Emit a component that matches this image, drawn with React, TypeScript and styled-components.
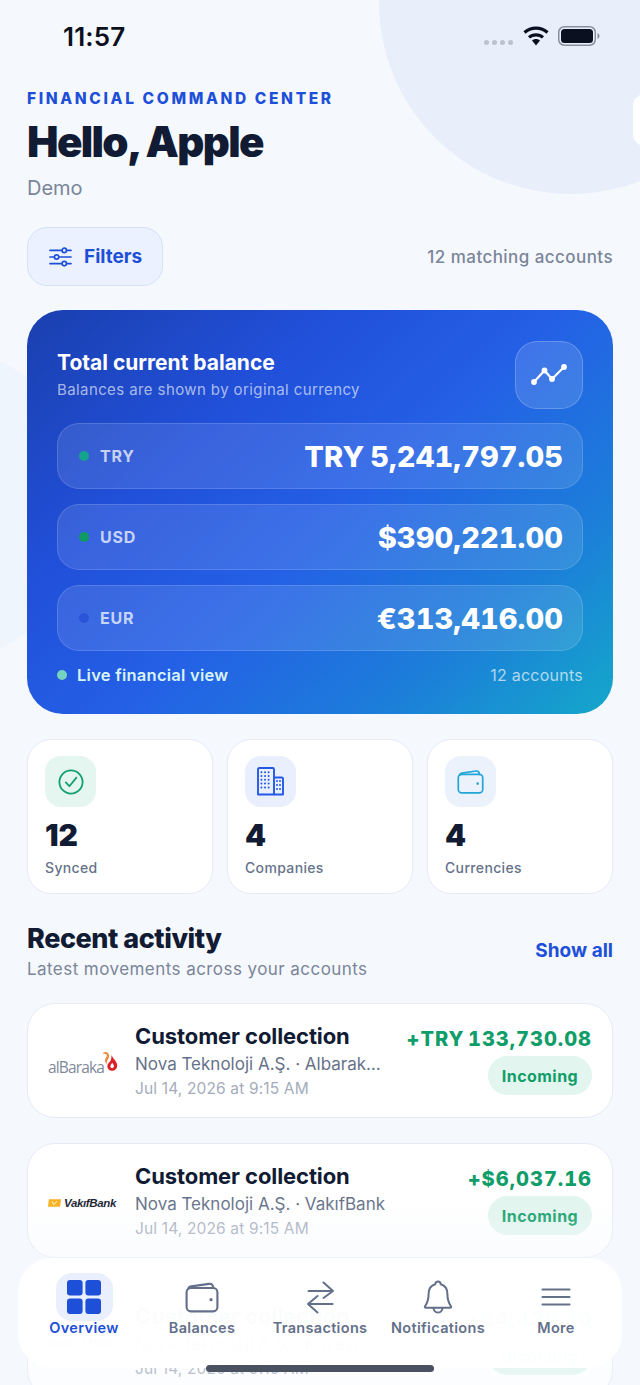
import React from 'react'
import styled, { createGlobalStyle } from 'styled-components'

const GlobalStyle = createGlobalStyle`
  html, body { margin: 0; padding: 0; background: #f5f8fd; }
  * { box-sizing: border-box; }
  body { font-family: Inter, "Noto Sans", "Liberation Sans", sans-serif; }
`

const Page = styled.div`
  position: relative;
  width: 640px;
  height: 1385px;
  overflow: hidden;
  background: #f5f8fd;
`

const TopCircle = styled.div`
  position: absolute;
  left: 379px;
  top: -190px;
  width: 384px;
  height: 384px;
  border-radius: 50%;
  background: #e8eefa;
`

const LeftBlob = styled.div`
  position: absolute;
  left: -230px;
  top: 345px;
  width: 320px;
  height: 320px;
  border-radius: 50%;
  background: #eff5fc;
`

const EdgeChip = styled.div`
  position: absolute;
  left: 633px;
  top: 94px;
  width: 40px;
  height: 52px;
  border-radius: 12px;
  background: #ffffff;
`

const Content = styled.div`
  position: relative;
  padding: 0 27px;
`

const StatusBar = styled.div`
  display: flex;
  align-items: center;
  justify-content: space-between;
  height: 72px;
  padding: 0 13px 0 36px;
`

const Clock = styled.span`
  font-size: 26px;
  font-weight: 600;
  letter-spacing: 0.15px;
  color: #0b1020;
`

const StatusIcons = styled.div`
  display: flex;
  align-items: center;
  gap: 9px;
`

const SignalDots = styled.div`
  display: flex;
  gap: 3px;
  margin-top: 12px;
  margin-right: 1px;
`

const SignalDot = styled.span`
  width: 5px;
  height: 5px;
  border-radius: 50%;
  background: #bcc2cc;
`

const Eyebrow = styled.div`
  margin-top: 18px;
  font-size: 15.5px;
  line-height: 18px;
  font-weight: 800;
  letter-spacing: 2.64px;
  color: #1d4fd8;
`

const Title = styled.h1`
  margin: 11px 0 0;
  font-size: 42px;
  line-height: 46px;
  font-weight: 900;
  letter-spacing: -1.62px;
  color: #111b33;
`

const Company = styled.div`
  margin-top: 11px;
  font-size: 20px;
  line-height: 24px;
  color: #7a8599;
`

const FilterRow = styled.div`
  display: flex;
  align-items: center;
  justify-content: space-between;
  margin-top: 27px;
`

const FilterButton = styled.button`
  display: flex;
  align-items: center;
  gap: 12px;
  width: 136px;
  height: 59px;
  padding: 0 0 0 21px;
  border: 1.5px solid #d6e1f8;
  border-radius: 20px;
  background: #ebf1fe;
  font-family: inherit;
  font-size: 19px;
  font-weight: 700;
  color: #1d4fd8;
`

const MatchCount = styled.span`
  font-size: 17px;
  font-weight: 500;
  letter-spacing: 0.44px;
  color: #7a8599;
`

const BalanceCard = styled.section`
  margin-top: 24px;
  height: 404px;
  padding: 31px 30px 0;
  border-radius: 36px;
  background: linear-gradient(138deg, #1a3fae 0%, #2150da 30%, #2460e6 52%, #1c7fd9 78%, #14a8ca 100%);
  color: #fff;
`

const BalanceHead = styled.div`
  display: flex;
  justify-content: space-between;
  align-items: flex-start;
  height: 82px;
`

const BalanceTitle = styled.div`
  margin-top: 8px;
  font-size: 21px;
  line-height: 28px;
  font-weight: 700;
`

const BalanceNote = styled.div`
  margin-top: 3px;
  font-size: 15px;
  line-height: 20px;
  letter-spacing: 0.4px;
  color: rgba(255, 255, 255, 0.62);
`

const TrendTile = styled.div`
  display: flex;
  align-items: center;
  justify-content: center;
  width: 68px;
  height: 68px;
  border: 1.5px solid rgba(255, 255, 255, 0.2);
  border-radius: 22px;
  background: rgba(255, 255, 255, 0.13);
`

const CurrencyList = styled.div`
  display: flex;
  flex-direction: column;
  gap: 15px;
`

const CurrencyRow = styled.div`
  display: flex;
  align-items: center;
  height: 66px;
  padding: 0 19px 0 21px;
  border: 1.5px solid rgba(255, 255, 255, 0.14);
  border-radius: 22px;
  background: rgba(255, 255, 255, 0.11);
`

const CurrencyDot = styled.span<{ $color: string }>`
  width: 10px;
  height: 10px;
  border-radius: 50%;
  background: ${props => props.$color};
`

const CurrencyCode = styled.span`
  margin-left: 11px;
  font-size: 16px;
  font-weight: 700;
  letter-spacing: 0.75px;
  color: rgba(255, 255, 255, 0.72);
`

const CurrencyAmount = styled.span`
  margin-left: auto;
  font-size: 29px;
  font-weight: 800;
  font-variant-numeric: tabular-nums;
  letter-spacing: 0.08px;
  word-spacing: -2px;
  color: #fff;
`

const BalanceFoot = styled.div`
  display: flex;
  align-items: center;
  justify-content: space-between;
  margin-top: 14px;
`

const LiveLabel = styled.span`
  display: flex;
  align-items: center;
  gap: 10px;
  font-size: 16.5px;
  font-weight: 600;
  letter-spacing: 0.25px;
  color: #d8f3f6;
`

const LiveDot = styled.span`
  width: 10px;
  height: 10px;
  border-radius: 50%;
  background: #73d3c0;
`

const AccountCount = styled.span`
  font-size: 16px;
  letter-spacing: 0.25px;
  color: rgba(255, 255, 255, 0.66);
`

const StatGrid = styled.div`
  display: grid;
  grid-template-columns: repeat(3, 186px);
  gap: 14px;
  margin-top: 25px;
`

const StatCard = styled.div`
  height: 155px;
  padding: 16px 17px;
  border: 1.5px solid #e5eaf4;
  border-radius: 24px;
  background: #fff;
`

const StatTile = styled.div<{ $bg: string }>`
  display: flex;
  align-items: center;
  justify-content: center;
  width: 51px;
  height: 51px;
  border-radius: 16px;
  background: ${props => props.$bg};
`

const StatValue = styled.div`
  margin-top: 10px;
  font-size: 30px;
  line-height: 36px;
  font-weight: 900;
  color: #111b33;
`

const StatLabel = styled.div`
  margin-top: 6px;
  font-size: 14px;
  line-height: 18px;
  font-weight: 500;
  letter-spacing: 0.35px;
  color: #66728a;
`

const SectionHead = styled.div`
  display: flex;
  align-items: center;
  justify-content: space-between;
  margin-top: 28px;
`

const SectionTitle = styled.h2`
  margin: 0;
  font-size: 27px;
  line-height: 34px;
  font-weight: 800;
  letter-spacing: -0.45px;
  color: #111b33;
`

const SectionNote = styled.div`
  margin-top: 2px;
  font-size: 17px;
  line-height: 22px;
  letter-spacing: 0.44px;
  color: #7a8599;
`

const ShowAll = styled.a`
  margin-top: -2px;
  font-size: 19px;
  font-weight: 700;
  color: #1d4fd8;
`

const ActivityList = styled.div`
  display: flex;
  flex-direction: column;
  gap: 25px;
  margin-top: 23px;
`

const ActivityCard = styled.div`
  display: flex;
  height: 115px;
  padding: 0 20px;
  border: 1.5px solid #e5eaf4;
  border-radius: 28px;
  background: #fff;
`

const LogoSlot = styled.div`
  display: flex;
  align-items: center;
  justify-content: flex-start;
  flex: none;
  width: 87px;
  padding-top: 4px;
`

const BarakaMark = styled.div`
  display: flex;
  align-items: flex-end;
  margin-top: 3px;
  font-family: "Open Sans", sans-serif;
  font-size: 15.5px;
  letter-spacing: -0.85px;
  color: #7f8998;
`

const VakifMark = styled.div`
  display: flex;
  align-items: center;
  gap: 3px;
  font-family: "Liberation Sans", sans-serif;
  font-size: 11.5px;
  font-weight: 700;
  font-style: italic;
  letter-spacing: -0.35px;
  color: #1a1f33;
`

const KuveytMark = styled.div`
  font-size: 9px;
  font-weight: 700;
  color: #0f7a4f;
`

const ActivityText = styled.div`
  flex: 1;
  min-width: 0;
  padding-top: 18px;
`

const ActivityTitle = styled.div`
  font-size: 22px;
  line-height: 28px;
  font-weight: 700;
  letter-spacing: -0.1px;
  color: #111b33;
`

const ActivityMeta = styled.div`
  max-width: 250px;
  margin-top: 2px;
  overflow: hidden;
  white-space: nowrap;
  text-overflow: ellipsis;
  font-size: 17px;
  line-height: 24px;
  color: #66728a;
`

const ActivityDate = styled.div`
  margin-top: 3px;
  font-size: 15.5px;
  line-height: 20px;
  letter-spacing: 0.15px;
  color: #a4acbb;
`

const ActivitySide = styled.div`
  display: flex;
  flex-direction: column;
  align-items: flex-end;
  flex: none;
  padding-top: 22px;
`

const ActivityAmount = styled.div`
  font-size: 20px;
  line-height: 26px;
  font-weight: 800;
  font-variant-numeric: tabular-nums;
  letter-spacing: 1px;
  word-spacing: -3px;
  color: #0f9d69;
`

const Badge = styled.span`
  display: flex;
  align-items: center;
  justify-content: center;
  width: 104px;
  height: 39px;
  margin-top: 4px;
  border-radius: 20px;
  background: #e2f5ee;
  font-size: 16px;
  font-weight: 700;
  letter-spacing: 0.45px;
  color: #0f9d69;
`

const BottomFade = styled.div`
  position: absolute;
  left: 0;
  right: 0;
  bottom: 0;
  height: 185px;
  background: linear-gradient(180deg, rgba(245, 248, 253, 0) 0%, rgba(245, 248, 253, 0.5) 35%, rgba(245, 248, 253, 0.25) 100%);
  pointer-events: none;
`

const Nav = styled.nav`
  position: absolute;
  left: 18px;
  top: 1258px;
  display: grid;
  grid-template-columns: repeat(5, 118px);
  width: 604px;
  height: 110px;
  padding: 15px 7px 0;
  border-radius: 34px;
  background: rgba(255, 255, 255, 0.975);
`

const NavItem = styled.div<{ $active?: boolean }>`
  display: flex;
  flex-direction: column;
  align-items: center;
  font-size: 14.5px;
  line-height: 14px;
  font-weight: 600;
  letter-spacing: 0.32px;
  white-space: nowrap;
  color: ${props => (props.$active ? '#1d4fd8' : '#64708a')};
`

const NavIconBox = styled.div<{ $active?: boolean }>`
  display: flex;
  align-items: center;
  justify-content: center;
  width: 57px;
  height: 48px;
  border-radius: 16px;
  background: ${props => (props.$active ? '#e9effd' : 'transparent')};
`

const HomeBar = styled.div`
  position: absolute;
  left: 206px;
  top: 1365px;
  width: 228px;
  height: 7px;
  border-radius: 4px;
  background: #4a5160;
`

const WifiIcon = () => (
  <svg width="26" height="22" viewBox="0 0 26 22">
    <path d="M1.5 7.5C7.8 1.7 18.2 1.7 24.5 7.5" fill="none" stroke="#0b1020" strokeWidth="3.2" />
    <path d="M6 12.4C9.8 8.9 16.2 8.9 20 12.4" fill="none" stroke="#0b1020" strokeWidth="3.2" />
    <path d="M9 15.6C11.2 13.6 14.8 13.6 17 15.6L13 20.5Z" fill="#0b1020" />
  </svg>
)

const BatteryIcon = () => (
  <svg width="42" height="20" viewBox="0 0 42 20">
    <rect x="0.75" y="0.75" width="36.5" height="18.5" rx="5.5" fill="none" stroke="#8a8f9c" strokeWidth="1.5" />
    <rect x="3" y="3" width="32" height="14" rx="3.5" fill="#0b1020" />
    <path d="M39.5 7v6c1.2-.5 2-1.6 2-3s-.8-2.5-2-3Z" fill="#8a8f9c" />
  </svg>
)

const FilterIcon = () => (
  <svg width="23" height="20" viewBox="0 0 23 20" fill="none" stroke="#1d4fd8" strokeWidth="1.7" strokeLinecap="round">
    <path d="M1 3.4h12M17.6 3.4H22M1 10h4.4M9.8 10H22M1 16.6h12M17.6 16.6H22" />
    <circle cx="15.3" cy="3.4" r="2.2" />
    <circle cx="7.6" cy="10" r="2.2" />
    <circle cx="15.3" cy="16.6" r="2.2" />
  </svg>
)

const TrendIcon = () => (
  <svg width="36" height="22" viewBox="0 0 36 22" fill="#fff" stroke="#fff" strokeWidth="2.2" strokeLinecap="round" strokeLinejoin="round">
    <path d="M3 18 L13.5 6.5 L21 15 L33 3" fill="none" />
    <circle cx="3" cy="18" r="1.8" />
    <circle cx="13.5" cy="6.5" r="1.8" />
    <circle cx="21" cy="15" r="1.8" />
    <circle cx="33" cy="3" r="1.8" />
  </svg>
)

const CheckIcon = () => (
  <svg width="26" height="26" viewBox="0 0 26 26" fill="none" stroke="#12a070" strokeWidth="1.8" strokeLinecap="round" strokeLinejoin="round">
    <circle cx="13" cy="13" r="11.6" />
    <path d="M7.8 13.4l3.6 3.8 7-8.6" />
  </svg>
)

const BuildingIcon = () => (
  <svg width="27" height="29" viewBox="0 0 27 29" fill="none" stroke="#2459e8" strokeWidth="1.9" strokeLinejoin="round">
    <path d="M1 27.5V2.2C1 1.5 1.5 1 2.2 1h13.6c.7 0 1.2.5 1.2 1.2v25.3H1Z" />
    <path d="M17 10.5h7.8c.7 0 1.2.5 1.2 1.2v15.8h-9" />
    <path
      d="M4.4 5.2h.01M8 5.2h.01M11.6 5.2h.01M4.4 9h.01M8 9h.01M11.6 9h.01M4.4 12.8h.01M8 12.8h.01M11.6 12.8h.01M4.4 16.6h.01M8 16.6h.01M11.6 16.6h.01M4.4 20.4h.01M8 20.4h.01M11.6 20.4h.01M20 14h.01M23 14h.01M20 18h.01M23 18h.01M20 22h.01M23 22h.01"
      strokeWidth="2"
      strokeLinecap="round"
    />
  </svg>
)

const WalletIcon = ({ color, size }: { color: string; size: number }) => (
  <svg width={size} height={size} viewBox="0 0 32 32" fill="none" stroke={color} strokeWidth="2" strokeLinejoin="round" strokeLinecap="round">
    <rect x="1.5" y="7.5" width="29" height="22" rx="4" />
    <path d="M3 8.5C3.4 7 4.4 6.2 6 6L22.5 3.6C24.8 3.3 26.3 4.6 26.7 7.5" />
    <circle cx="24.5" cy="18.5" r="1.5" fill={color} stroke="none" />
  </svg>
)

const GridIcon = () => (
  <svg width="34" height="34" viewBox="0 0 34 34" fill="#1d4fd8">
    <rect x="0" y="0" width="15.6" height="15.6" rx="3" />
    <rect x="18.4" y="0" width="15.6" height="15.6" rx="3" />
    <rect x="0" y="18.4" width="15.6" height="15.6" rx="3" />
    <rect x="18.4" y="18.4" width="15.6" height="15.6" rx="3" />
  </svg>
)

const SwapIcon = () => (
  <svg width="27" height="33" viewBox="0 0 27 33" fill="none" stroke="#64708a" strokeWidth="2" strokeLinecap="round" strokeLinejoin="round">
    <path d="M1.5 10H26M16.5 1.5 26 10l-9.5 7" />
    <path d="M25.5 23H1M10.5 15 1 23l9.5 8.5" />
  </svg>
)

const BellIcon = () => (
  <svg width="30" height="34" viewBox="0 0 30 34" fill="none" stroke="#64708a" strokeWidth="2" strokeLinecap="round" strokeLinejoin="round">
    <path d="M15 1.5c1.6 0 2.6 1 2.8 2.8 4.4 1.3 6.6 5 6.6 9.6 0 5.6 1.2 9 3.6 12.4.5.7 0 1.4-.8 1.4H2.8c-.8 0-1.3-.7-.8-1.4 2.4-3.4 3.6-6.8 3.6-12.4 0-4.6 2.2-8.3 6.6-9.6.2-1.8 1.2-2.8 2.8-2.8Z" />
    <path d="M10.5 28c.3 2.8 2 4.5 4.5 4.5s4.2-1.7 4.5-4.5" />
  </svg>
)

const MenuIcon = () => (
  <svg width="30" height="20" viewBox="0 0 30 20" fill="none" stroke="#64708a" strokeWidth="2.1" strokeLinecap="round">
    <path d="M1.5 2.5h27M1.5 10h27M1.5 17.5h27" />
  </svg>
)

const BarakaDrop = () => (
  <svg width="17" height="21" viewBox="0 0 21 25" style={{ marginLeft: -3, marginBottom: 6 }}>
    <path d="M2 2.5C5-.5 9.5 1 10 5c.3 2.4-1 4-2 6-.8 1.6-1 3.2-.5 4.5-2.5-1.5-3.2-4-2-6.5.8-1.7 2-2.8 1.7-4.2C7 3.4 5 2.6 2 2.5Z" fill="#ef8a3c" />
    <path d="M13.5 5c.8 4 6.5 7 6.5 12.5 0 3.7-2.7 6.5-6 6.5-3.6 0-6.2-2.8-6.2-6 0-3.3 3.2-4.5 4.5-7.5.5-1.6.6-3.5.7-5.5Z" fill="#dd1f26" />
    <path d="M13.8 14c1 1.5 2.2 2.5 2.2 4.2 0 1.5-1 2.6-2.2 2.6-1.3 0-2.2-1-2.2-2.4 0-1.7 1.3-2.6 2.2-4.4Z" fill="#fff" />
  </svg>
)

const VakifFlag = () => (
  <svg width="13" height="8" viewBox="0 0 17 10">
    <path d="M1.5 0H17l-1 8.5c-.1.9-.6 1.5-1.5 1.5H0L1 1c0-.6.2-1 .5-1Z" fill="#f7b11e" />
    <path d="M5 2.5 7.5 7 12 2.5" fill="none" stroke="#fff" strokeWidth="1.2" />
  </svg>
)

const currencies = [
  { code: 'TRY', amount: 'TRY 5,241,797.05', dot: '#14a38c' },
  { code: 'USD', amount: '$390,221.00', dot: '#109a64' },
  { code: 'EUR', amount: '€313,416.00', dot: '#2a55d8' },
]

const activities = [
  {
    logo: (
      <BarakaMark>
        alBaraka
        <BarakaDrop />
      </BarakaMark>
    ),
    meta: 'Nova Teknoloji A.Ş. · Albaraka Türk',
    amount: '+TRY 133,730.08',
  },
  {
    logo: (
      <VakifMark>
        <VakifFlag />
        VakıfBank
      </VakifMark>
    ),
    meta: 'Nova Teknoloji A.Ş. · VakıfBank',
    amount: '+$6,037.16',
  },
  {
    logo: <KuveytMark>KUVEYT TÜRK</KuveytMark>,
    meta: 'Nova Teknoloji A.Ş. · Kuveyt Türk',
    amount: '+€4,428.10',
  },
]

export default function App() {
  return (
    <Page>
      <GlobalStyle />
      <TopCircle />
      <LeftBlob />
      <EdgeChip />
      <Content>
        <StatusBar>
          <Clock>11:57</Clock>
          <StatusIcons>
            <SignalDots>
              <SignalDot />
              <SignalDot />
              <SignalDot />
              <SignalDot />
            </SignalDots>
            <WifiIcon />
            <BatteryIcon />
          </StatusIcons>
        </StatusBar>
        <Eyebrow>FINANCIAL COMMAND CENTER</Eyebrow>
        <Title>Hello, Apple</Title>
        <Company>Demo</Company>
        <FilterRow>
          <FilterButton>
            <FilterIcon />
            Filters
          </FilterButton>
          <MatchCount>12 matching accounts</MatchCount>
        </FilterRow>

        <BalanceCard>
          <BalanceHead>
            <div>
              <BalanceTitle>Total current balance</BalanceTitle>
              <BalanceNote>Balances are shown by original currency</BalanceNote>
            </div>
            <TrendTile>
              <TrendIcon />
            </TrendTile>
          </BalanceHead>
          <CurrencyList>
            {currencies.map(c => (
              <CurrencyRow key={c.code}>
                <CurrencyDot $color={c.dot} />
                <CurrencyCode>{c.code}</CurrencyCode>
                <CurrencyAmount>{c.amount}</CurrencyAmount>
              </CurrencyRow>
            ))}
          </CurrencyList>
          <BalanceFoot>
            <LiveLabel>
              <LiveDot />
              Live financial view
            </LiveLabel>
            <AccountCount>12 accounts</AccountCount>
          </BalanceFoot>
        </BalanceCard>

        <StatGrid>
          <StatCard>
            <StatTile $bg="#e4f6ef">
              <CheckIcon />
            </StatTile>
            <StatValue>12</StatValue>
            <StatLabel>Synced</StatLabel>
          </StatCard>
          <StatCard>
            <StatTile $bg="#e9effd">
              <BuildingIcon />
            </StatTile>
            <StatValue>4</StatValue>
            <StatLabel>Companies</StatLabel>
          </StatCard>
          <StatCard>
            <StatTile $bg="#ecf2fc">
              <WalletIcon color="#22a5d8" size={27} />
            </StatTile>
            <StatValue>4</StatValue>
            <StatLabel>Currencies</StatLabel>
          </StatCard>
        </StatGrid>

        <SectionHead>
          <div>
            <SectionTitle>Recent activity</SectionTitle>
            <SectionNote>Latest movements across your accounts</SectionNote>
          </div>
          <ShowAll>Show all</ShowAll>
        </SectionHead>

        <ActivityList>
          {activities.map(a => (
            <ActivityCard key={a.amount}>
              <LogoSlot>{a.logo}</LogoSlot>
              <ActivityText>
                <ActivityTitle>Customer collection</ActivityTitle>
                <ActivityMeta>{a.meta}</ActivityMeta>
                <ActivityDate>Jul 14, 2026 at 9:15 AM</ActivityDate>
              </ActivityText>
              <ActivitySide>
                <ActivityAmount>{a.amount}</ActivityAmount>
                <Badge>Incoming</Badge>
              </ActivitySide>
            </ActivityCard>
          ))}
        </ActivityList>
      </Content>

      <BottomFade />
      <Nav>
        <NavItem $active>
          <NavIconBox $active>
            <GridIcon />
          </NavIconBox>
          Overview
        </NavItem>
        <NavItem>
          <NavIconBox>
            <WalletIcon color="#64708a" size={34} />
          </NavIconBox>
          Balances
        </NavItem>
        <NavItem>
          <NavIconBox>
            <SwapIcon />
          </NavIconBox>
          Transactions
        </NavItem>
        <NavItem>
          <NavIconBox>
            <BellIcon />
          </NavIconBox>
          Notifications
        </NavItem>
        <NavItem>
          <NavIconBox>
            <MenuIcon />
          </NavIconBox>
          More
        </NavItem>
      </Nav>
      <HomeBar />
    </Page>
  )
}
